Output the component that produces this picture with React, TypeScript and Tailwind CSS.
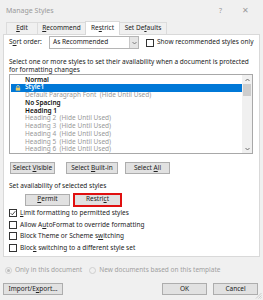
import React from 'react';

const items: { label: string; kind: 'bold' | 'sel' | 'gray' }[] = [
  { label: 'Normal', kind: 'bold' },
  { label: 'Style1', kind: 'sel' },
  { label: 'Default Paragraph Font  (Hide Until Used)', kind: 'gray' },
  { label: 'No Spacing', kind: 'bold' },
  { label: 'Heading 1', kind: 'bold' },
  { label: 'Heading 2  (Hide Until Used)', kind: 'gray' },
  { label: 'Heading 3  (Hide Until Used)', kind: 'gray' },
  { label: 'Heading 4  (Hide Until Used)', kind: 'gray' },
  { label: 'Heading 5  (Hide Until Used)', kind: 'gray' },
  { label: 'Heading 6  (Hide Until Used)', kind: 'gray' },
];

const Btn: React.FC<{ children: React.ReactNode; className?: string }> = ({ children, className = '' }) => (
  <div
    className={`h-[12px] flex items-center justify-center bg-[#e1e1e1] border border-[#adadad] text-[6.5px] text-[#222] whitespace-pre ${className}`}
  >
    {children}
  </div>
);

const Check: React.FC<{ checked?: boolean; label: React.ReactNode }> = ({ checked, label }) => (
  <div className="h-[11.5px] flex items-center gap-[3px]">
    <div className="w-[8px] h-[8px] border border-[#333] bg-white flex items-center justify-center">
      {checked && (
        <svg width="6" height="6" viewBox="0 0 6 6">
          <path d="M0.7 3.2 L2.3 4.8 L5.3 1.2" stroke="#333" strokeWidth="0.9" fill="none" />
        </svg>
      )}
    </div>
    <span className="text-[6.5px] text-[#222] whitespace-pre">{label}</span>
  </div>
);

export default function App() {
  return (
    <div
      className="w-[263px] h-[300px] bg-[#f0f0f0] relative overflow-hidden leading-none"
      style={{ fontFamily: '"Noto Sans", "Open Sans", sans-serif' }}
    >
      {/* title bar */}
      <div className="h-[20px] flex items-center justify-between pl-[6px] pr-[14px]">
        <span className="text-[7px] text-[#9a9a9a]">Manage Styles</span>
        <div className="flex items-center gap-[20px] text-[#9a9a9a]">
          <span className="text-[7px]">?</span>
          <span className="text-[8px]">✕</span>
        </div>
      </div>

      {/* tabs */}
      <div className="h-[14px] flex items-end pl-[6px] text-[6.5px] text-[#222]">
        <div className="h-[12px] w-[31px] flex items-center justify-center border-l border-t border-[#dcdcdc]">
          <span><u>E</u>dit</span>
        </div>
        <div className="h-[12px] w-[48px] flex items-center justify-center border-l border-t border-[#dcdcdc]">
          <span><u>R</u>ecommend</span>
        </div>
        <div className="h-[14px] w-[35px] flex items-center justify-center bg-white border-l border-t border-r border-[#d9d9d9] relative top-[1px] z-10">
          <span>Re<u>s</u>trict</span>
        </div>
        <div className="h-[12px] w-[47px] flex items-center justify-center border-t border-r border-[#dcdcdc]">
          <span>Set De<u>f</u>aults</span>
        </div>
      </div>

      {/* panel */}
      <div className="mx-[3px] h-[223px] bg-white border border-[#d9d9d9] pl-[5px] pr-[4px] flex flex-col">
        <div className="mt-[1px] h-[13px] flex items-center text-[6.5px] text-[#222]">
          <span className="w-[40px]">S<u>o</u>rt order:</span>
          <div className="w-[90px] h-[13px] border border-[#b5b5b5] flex items-center">
            <span className="flex-1 pl-[3px]">As Recommended</span>
            <div className="w-[9px] h-full bg-[#e5e5e5] border-l border-[#c8c8c8] flex items-center justify-center">
              <svg width="5" height="4" viewBox="0 0 5 4">
                <path d="M0.5 1 L2.5 3 L4.5 1" stroke="#666" strokeWidth="0.8" fill="none" />
              </svg>
            </div>
          </div>
          <div className="ml-[7px] w-[8px] h-[8px] border border-[#333]" />
          <span className="ml-[3px]">Show recommended styles only</span>
        </div>

        <div className="mt-[9px] text-[6.5px] leading-[7.5px] text-[#222]">
          <div>Select one or more styles to set their availability when a document is protected</div>
          <div>for formatting changes</div>
        </div>

        <div className="mt-[1px] w-[244px] h-[80px] border border-[#a8a8a8] flex">
          <div className="flex-1 pt-[1px] pl-[1px]">
            {items.map(it => (
              <div
                key={it.label}
                className={`h-[7.75px] flex items-center text-[6.5px] whitespace-pre ${
                  it.kind === 'sel'
                    ? 'bg-[#0078d7] text-white'
                    : it.kind === 'bold'
                    ? 'text-[#111] font-semibold'
                    : 'text-[#999]'
                }`}
              >
                <div className="w-[14px] flex justify-center">
                  {it.kind === 'sel' && (
                    <svg width="6" height="6" viewBox="0 0 6 6">
                      <path d="M1.7 2.6 V1.8 A1.3 1.3 0 0 1 4.3 1.8 V2.6" stroke="#e8d9a0" strokeWidth="0.8" fill="none" />
                      <rect x="0.8" y="2.6" width="4.4" height="3" fill="#e8c860" />
                    </svg>
                  )}
                </div>
                <span className={it.kind === 'sel' ? 'font-semibold' : ''}>{it.label}</span>
              </div>
            ))}
          </div>
          <div className="w-[10px] bg-[#f0f0f0] flex flex-col items-center">
            <div className="h-[9px] flex items-center">
              <svg width="5" height="4" viewBox="0 0 5 4">
                <path d="M0.5 3 L2.5 1 L4.5 3" stroke="#606060" strokeWidth="0.9" fill="none" />
              </svg>
            </div>
            <div className="w-[8px] h-[12px] bg-[#cdcdcd]" />
            <div className="flex-1" />
            <div className="h-[9px] flex items-center">
              <svg width="5" height="4" viewBox="0 0 5 4">
                <path d="M0.5 1 L2.5 3 L4.5 1" stroke="#606060" strokeWidth="0.9" fill="none" />
              </svg>
            </div>
          </div>
        </div>

        <div className="mt-[8px] flex pl-[1px]">
          <Btn className="w-[45px]">Select <u>V</u>isible</Btn>
          <Btn className="w-[52px] ml-[11px]">Select <u>B</u>uilt-in</Btn>
          <Btn className="w-[45px] ml-[7px]">Select <u>A</u>ll</Btn>
        </div>

        <div className="mt-[9px] text-[6.5px] text-[#222]">Set availability of selected styles</div>

        <div className="mt-[3px] flex items-center pl-[16px]">
          <Btn className="w-[45px] h-[12px]"><u>P</u>ermit</Btn>
          <div className="ml-[3px] w-[49px] h-[14px] border-[2px] border-[#e01010] bg-[#e1e1e1] flex items-center justify-center text-[6.5px] text-[#222]">
            Restri<u>c</u>t
          </div>
        </div>

        <div className="mt-[1px] flex flex-col">
          <Check checked label={<><u>L</u>imit formatting to permitted styles</>} />
          <Check label={<>Allow A<u>u</u>toFormat to override formatting</>} />
          <Check label={<>Block Theme or Scheme s<u>w</u>itching</>} />
          <Check label={<>Bloc<u>k</u> switching to a different style set</>} />
        </div>
      </div>

      {/* radios */}
      <div className="h-[26px] flex items-center pl-[5px] text-[6.5px] text-[#a0a0a0]">
        <div className="w-[7px] h-[7px] rounded-full border border-[#cfcfcf] flex items-center justify-center">
          <div className="w-[3px] h-[3px] rounded-full bg-[#bbb]" />
        </div>
        <span className="ml-[3px]">Only in this document</span>
        <div className="ml-[7px] w-[7px] h-[7px] rounded-full border border-[#cfcfcf]" />
        <span className="ml-[3px]">New documents based on this template</span>
      </div>

      {/* footer */}
      <div className="flex items-center px-[3px]">
        <Btn className="w-[60px] h-[12px]">Import/E<u>x</u>port...</Btn>
        <div className="flex-1" />
        <Btn className="w-[45px] h-[12px]">OK</Btn>
        <Btn className="w-[45px] h-[12px] ml-[6px] mr-[2px]">Cancel</Btn>
      </div>

      {/* resize grip */}
      <svg className="absolute right-[1px] bottom-[1px]" width="7" height="7" viewBox="0 0 7 7">
        <path d="M6.5 1 L1 6.5 M6.5 3.5 L3.5 6.5 M6.5 5.5 L5.5 6.5" stroke="#bbb" strokeWidth="0.7" />
      </svg>
    </div>
  );
}
